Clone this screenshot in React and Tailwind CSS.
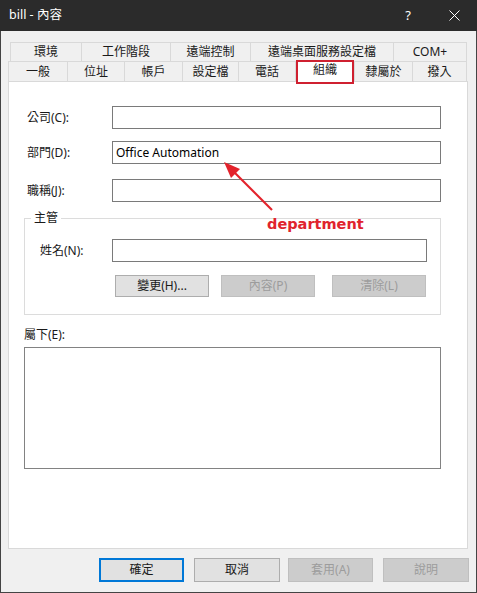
import React from "react";

const row1 = [
  { t: "環境", c: "w-[71px]" },
  { t: "工作階段", c: "w-[89px]" },
  { t: "遠端控制", c: "w-[80px]" },
  { t: "遠端桌面服務設定檔", c: "w-[143px]" },
  { t: "COM+", c: "w-[74px] border-r" },
];

const row2 = [
  { t: "一般", c: "w-[59px]" },
  { t: "位址", c: "w-[57px]" },
  { t: "帳戶", c: "w-[58px]" },
  { t: "設定檔", c: "w-[56px]" },
  { t: "電話", c: "w-[57px]" },
  { t: "組織", c: "w-[59px]", sel: true },
  { t: "隸屬於", c: "w-[58px]" },
  { t: "撥入", c: "w-[55px] border-r" },
];

function Field({ label, value, mt }) {
  return (
    <div className={"flex items-center h-[23px] " + mt}>
      <div className="w-[88px] pl-[3px] text-[12px] text-[#1a1a1a]">{label}</div>
      <div className="flex-1 h-[23px] border border-[#7a7a7a] bg-white flex items-center pl-[3px] text-[12px] text-black">
        {value}
      </div>
    </div>
  );
}

export default function App() {
  return (
    <div
      className="w-[477px] h-[593px] overflow-hidden relative bg-[#f0f0f0]"
      style={{ fontFamily: '"Noto Sans", "Noto Sans CJK TC", sans-serif' }}
    >
      {/* title bar */}
      <div className="h-[31px] bg-[#2b2b2b] flex items-center text-white text-[12.5px] pl-[9px]">
        <span className="leading-none">bill - 內容</span>
        <span className="ml-auto mr-[38px] text-[13px] leading-none">?</span>
        <svg width="11" height="11" viewBox="0 0 11 11" className="mr-[17px]">
          <path d="M0.5 0.5 L10.5 10.5 M10.5 0.5 L0.5 10.5" stroke="white" strokeWidth="1" />
        </svg>
      </div>

      <div className="h-[562px] border-l border-r border-b border-[#444444] flex flex-col">
        {/* tabs */}
        <div className="mt-[11px] ml-[9px] flex h-[19px]">
          {row1.map((r) => (
            <div
              key={r.t}
              className={
                "h-[19px] border-t border-l border-[#d9d9d9] flex items-center justify-center text-[12px] text-[#1a1a1a] leading-none " +
                r.c
              }
            >
              {r.t}
            </div>
          ))}
        </div>
        <div className="ml-[7px] flex h-[20px] relative z-10">
          {row2.map((r) =>
            r.sel ? (
              <div
                key={r.t}
                className={"relative h-[21px] bg-white border-t border-l border-[#d9d9d9] flex items-center justify-center text-[12px] text-[#1a1a1a] leading-none pb-[4px] " + r.c}
              >
                {r.t}
                <div className="absolute left-0 right-0 top-[-2px] h-[24px] border-2 border-[#cf2030]" />
              </div>
            ) : (
              <div
                key={r.t}
                className={
                  "h-[20px] border-t border-l border-[#d9d9d9] flex items-center justify-center text-[12px] text-[#1a1a1a] leading-none " +
                  r.c
                }
              >
                {r.t}
              </div>
            )
          )}
        </div>

        {/* panel */}
        <div className="ml-[7px] w-[460px] h-[468px] border border-[#d9d9d9] bg-white pt-[24px] pl-[15px] pr-[26px] flex flex-col">
          <Field label="公司(C):" mt="" />
          <Field label="部門(D):" value="Office Automation" mt="mt-[12px]" />
          <Field label="職稱(J):" mt="mt-[15px]" />

          {/* group box */}
          <div className="relative mt-[16px] h-[97px] border border-[#dcdcdc] pt-[20px] pl-[15px] pr-[13px]">
            <div className="absolute left-[6px] top-[-9px] bg-white px-[3px] text-[12px] leading-[16px] text-[#1a1a1a]">
              主管
            </div>
            <div className="flex items-center h-[23px]">
              <div className="w-[72px] text-[12px] text-[#1a1a1a]">姓名(N):</div>
              <div className="flex-1 h-[23px] border border-[#7a7a7a] bg-white" />
            </div>
            <div className="flex mt-[13px] ml-[75px] h-[22px] text-[12px] leading-none">
              <div className="w-[94px] h-[22px] bg-[#e1e1e1] border border-[#adadad] flex items-center justify-center text-[#1a1a1a]">
                變更(H)...
              </div>
              <div className="ml-[12px] w-[94px] h-[22px] bg-[#cccccc] border border-[#bfbfbf] flex items-center justify-center text-[#9c9c9c]">
                內容(P)
              </div>
              <div className="ml-[17px] w-[94px] h-[22px] bg-[#cccccc] border border-[#bfbfbf] flex items-center justify-center text-[#9c9c9c]">
                清除(L)
              </div>
            </div>
          </div>

          <div className="mt-[12px] h-[16px] text-[12px] leading-[16px] text-[#1a1a1a]">屬下(E):</div>
          <div className="mt-[4px] h-[122px] border border-[#828282] bg-white" />
        </div>

        {/* bottom buttons */}
        <div className="mt-[9px] flex justify-end pr-[7px] text-[12px] leading-none">
          <div className="w-[85px] h-[24px] bg-[#e1e1e1] border-2 border-[#0078d7] flex items-center justify-center text-[#1a1a1a]">
            確定
          </div>
          <div className="ml-[10px] w-[86px] h-[24px] bg-[#e1e1e1] border border-[#adadad] flex items-center justify-center text-[#1a1a1a]">
            取消
          </div>
          <div className="ml-[8px] w-[85px] h-[24px] bg-[#cccccc] border border-[#bfbfbf] flex items-center justify-center text-[#9c9c9c]">
            套用(A)
          </div>
          <div className="ml-[10px] w-[86px] h-[24px] bg-[#cccccc] border border-[#bfbfbf] flex items-center justify-center text-[#9c9c9c]">
            說明
          </div>
        </div>
      </div>

      {/* annotation overlay */}
      <svg className="absolute left-0 top-0 pointer-events-none" width="477" height="593">
        <line x1="272" y1="210" x2="234" y2="172" stroke="#e3232c" strokeWidth="2.2" />
        <polygon points="224,162 231,178 240,169" fill="#e3232c" />
      </svg>
      <div
        className="absolute left-[267px] top-[217px] text-[14.5px] font-bold leading-none text-[#e0232d]"
        style={{ fontFamily: '"DejaVu Sans", sans-serif' }}
      >
        department
      </div>
    </div>
  );
}
